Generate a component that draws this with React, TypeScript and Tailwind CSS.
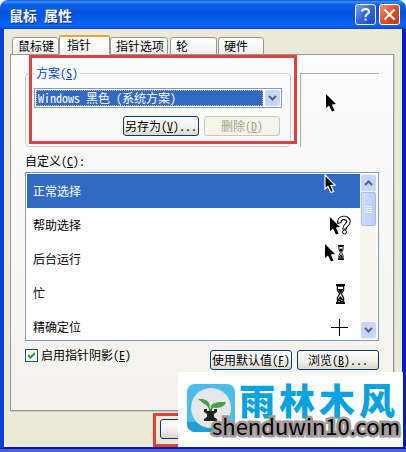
import React, { useState } from 'react';

const TABS = ['鼠标键', '指针', '指针选项', '轮', '硬件'];

const TAB_WIDTHS: Record<string, string> = {
  鼠标键: 'w-[47px]',
  指针: 'w-[51px]',
  指针选项: 'w-[58px]',
  轮: 'w-[47px] ml-0.5',
  硬件: 'w-[46px] ml-px',
};

function Arrow({ x = 0, y = 0, outlined = false }: { x?: number; y?: number; outlined?: boolean }) {
  return (
    <path
      transform={`translate(${x} ${y})`}
      d="M1 0 L1 14 L4 11.400 L7 17.500 L9.600 16.400 L6.800 10.400 L11 10 Z"
      fill="#000"
      stroke={outlined ? '#fff' : 'none'}
      strokeWidth={outlined ? 1.2 : 0}
    />
  );
}

function Hourglass({ x, y, w, h }: { x: number; y: number; w: number; h: number }) {
  return (
    <svg x={x} y={y} width={w} height={h} viewBox="0 0 10 20" preserveAspectRatio="none">
      <path d="M0 0h10v2H0zM0 18h10v2H0z" fill="#000" />
      <path d="M1.5 2v4L4 10l-2.500 4v4h7v-4L6 10l2.500-4V2z" fill="#fff" stroke="#000" strokeWidth="1.3" />
      <path d="M2 5h6L5 10zM5 12l3 3.500V18H2v-2.500z" fill="#000" />
      <path d="M4 15h1v1H4zM6 16h1v1H6zM3 17h1v1H3z" fill="#fff" />
    </svg>
  );
}

const CURSORS: { name: string; icon: React.ReactNode }[] = [
  { name: '正常选择', icon: <Arrow outlined /> },
  {
    name: '帮助选择',
    icon: (
      <>
        <Arrow x={5} y={8} />
        <path d="M15.500 14.500 C14 7.500 24.500 7.500 24.500 12.500 C24.500 16 20.500 16 20.500 20.500" fill="none" stroke="#000" strokeWidth="4.500" />
        <path d="M15.500 13.500 C14 7.500 24.500 7.500 24.500 12.500 C24.500 16 20.500 16 20.500 19.500" fill="none" stroke="#fff" strokeWidth="2.500" />
        <circle cx="20.500" cy="23" r="2" fill="#fff" stroke="#000" />
      </>
    ),
  },
  {
    name: '后台运行',
    icon: (
      <>
        <Arrow y={1} />
        <Hourglass x={14} y={2} w={6} h={15} />
      </>
    ),
  },
  { name: '忙', icon: <Hourglass x={12} y={7} w={9} h={20} /> },
  { name: '精确定位', icon: <path d="M15.500 8v17M7 16.500h17" stroke="#000" fill="none" /> },
];

function Chevron({ up = false }: { up?: boolean }) {
  return (
    <svg className="w-[9px] h-[6px]" viewBox="0 0 9 6" fill="none" stroke="#4d6185" strokeWidth="2">
      <path d={up ? 'M1 5l3.500-3.500L8 5' : 'M1 1l3.500 3.500L8 1'} />
    </svg>
  );
}

function XpButton({ children, className = '', ...rest }: React.ButtonHTMLAttributes<HTMLButtonElement>) {
  return (
    <button
      className={`h-5 shrink-0 rounded-[3px] border border-[#003c74] bg-linear-to-b from-white via-[#f3f2ed] to-[#dcd8cc] text-center leading-4 whitespace-nowrap disabled:border-[#c9c7ba] disabled:from-[#f5f4ea] disabled:via-[#f5f4ea] disabled:to-[#f5f4ea] disabled:text-[#a1a192] ${className}`}
      {...rest}
    >
      {children}
    </button>
  );
}

function TitleBar() {
  return (
    <header className="flex h-[29px] shrink-0 items-center gap-[3px] rounded-t-lg bg-[linear-gradient(#0a4cc4_0%,#3c92fb_6%,#0a5fe6_16%,#0453dc_45%,#0260f4_75%,#0562f6_90%,#0345c4_100%)] pr-[6px] pl-[9px]">
      <h1 className="flex-1 text-sm leading-5 font-bold text-white [text-shadow:1px_1px_#0a2f8c]">鼠标 属性</h1>
      <button aria-label="帮助" className="flex size-[21px] items-center justify-center rounded-[3px] border border-white bg-linear-to-br from-[#7ba0f5] via-[#3364e0] to-[#1c48c8]">
        <svg className="size-[15px]" viewBox="0 0 15 15" fill="none" stroke="#fff" strokeWidth="2">
          <path d="M4 4.500C4 1 11 1 11 4.500C11 7 7.500 7 7.500 10M7.500 11.500v2" />
        </svg>
      </button>
      <button aria-label="关闭" className="flex size-[21px] items-center justify-center rounded-[3px] border border-white bg-linear-to-br from-[#ee9478] via-[#dd4f2a] to-[#c03a14]">
        <svg className="size-[13px]" viewBox="0 0 13 13" stroke="#fff" strokeWidth="2.200">
          <path d="M1.500 1.500l10 10M11.500 1.500l-10 10" />
        </svg>
      </button>
    </header>
  );
}

function Scrollbar() {
  return (
    <div className="flex w-[17px] shrink-0 flex-col bg-[#f6f5ee] p-px">
      <button aria-label="向上" className="flex h-4 shrink-0 items-center justify-center rounded-[2px] bg-[#c6d5fb]">
        <Chevron up />
      </button>
      <div className="mt-px flex h-[34px] flex-col items-center justify-center gap-px rounded-[2px] border border-[#a9bdea] bg-linear-to-r from-[#d2defd] to-[#b9cbf8]">
        <i className="h-px w-[6px] bg-[#eef4fe]" />
        <i className="h-px w-[6px] bg-[#eef4fe]" />
        <i className="h-px w-[6px] bg-[#eef4fe]" />
        <i className="h-px w-[6px] bg-[#eef4fe]" />
      </div>
      <div className="flex-1" />
      <button aria-label="向下" className="flex h-4 shrink-0 items-center justify-center rounded-[2px] bg-[#c6d5fb]">
        <Chevron />
      </button>
    </div>
  );
}

function Watermark() {
  return (
    <div className="absolute right-[3px] bottom-[2px] z-10 h-[75px] w-[225px] bg-white">
      <svg className="absolute top-3 left-[9px] size-12" viewBox="0 0 48 48">
        <rect width="48" height="48" rx="8" fill="#4bbde8" />
        <path d="M0 38h48v2a8 8 0 0 1-8 8H8a8 8 0 0 1-8-8z" fill="#1f9fd4" />
        <circle cx="24" cy="24" r="20" fill="#e6e7e9" />
        <path d="M17 25h3v2h2v-2h3v2h2v-2h3v3l-3 2v3l3 2v2H17v-2l3-2v-3l-3-2z" fill="#222" />
        <path d="M23 27C23 23 20 20 16 17M24 27C24 24 26 22 30 20" fill="none" stroke="#3a8a3c" strokeWidth="1.500" />
        <path d="M11 15C16 15 22 15 23 22C18 21 16 19 11 15zM23 23C26 18 31 18 39 18C37 24 30 25 23 23z" fill="#44a148" />
      </svg>
      <div className="absolute top-[7px] left-[61px] flex gap-1 font-['Noto_Sans_CJK_SC',sans-serif] text-[36px] leading-10 font-black text-[#08a2e2]">
        <span>雨</span>
        <span>林</span>
        <span>木</span>
        <span>风</span>
      </div>
      <div className="absolute top-[35px] left-[34px] font-['Noto_Sans_CJK_SC','Open_Sans',sans-serif] text-[22px] leading-9 text-black [-webkit-text-stroke:5px_#a39b99] [paint-order:stroke_fill]">
        shenduwin10.com
      </div>
    </div>
  );
}

export default function App() {
  const [tab, setTab] = useState('指针');
  const [selected, setSelected] = useState(0);
  const [shadow, setShadow] = useState(true);

  return (
    <div className="relative flex min-h-screen flex-col border-b-[3px] border-[#4a60dc] bg-white font-['Noto_Sans_Mono_CJK_SC','Noto_Sans_CJK_SC',monospace] text-xs leading-4 text-black">
      <TitleBar />

      <main className="flex flex-1 flex-col border-x-4 border-b-2 border-[#0c3fd6] border-r-[#0a1fb0] border-b-[#0a1fa0] bg-[#ece9d8] pt-[6px]">
        <div role="tablist" className="relative z-10 -mb-px flex h-5 shrink-0 items-end pl-2">
          {TABS.map(t => (
            <button
              key={t}
              role="tab"
              aria-selected={t === tab}
              onClick={() => setTab(t)}
              className={`${TAB_WIDTHS[t]} shrink-0 rounded-t-[3px] border text-left whitespace-nowrap ${
                t === tab
                  ? 'h-5 border-t-2 border-[#919b9c] border-t-[#e9a53c] border-b-[#fcfcfe] bg-[#fcfcfe] pb-1 pl-[7px]'
                  : 'h-[18px] border-[#919b9c] bg-linear-to-b from-white to-[#f0f0ea] pl-[5px]'
              }`}
            >
              {t}
            </button>
          ))}
        </div>

        <section className="relative mr-2 ml-[6px] flex flex-1 flex-col border border-[#919b9c] bg-linear-to-b from-[#fcfcfe] to-[#f3f2ec] px-[14px] pt-[10px] shadow-[1px_1px_#cfccbd]">
          <div className="flex gap-[9px]">
            <fieldset className="min-w-0 flex-1 rounded-[4px] border border-[#d0d0bf] px-2 pb-[10px]">
              <legend className="px-0.5 text-[#0046d5]">
                <label htmlFor="scheme">
                  方案(<u>S</u>)
                </label>
              </legend>
              <div className="relative mt-[7px] h-5 border border-[#7f9db9] bg-white p-px pr-[18px]">
                <select
                  id="scheme"
                  className="block h-4 w-full appearance-none border border-dotted border-[#e0b060] bg-[#316ac5] pl-px leading-[14px] text-white outline-none"
                >
                  <option>Windows 黑色 (系统方案)</option>
                </select>
                <span className="pointer-events-none absolute top-px right-px flex h-4 w-[15px] items-center justify-center rounded-[2px] bg-[#c6d5fb]">
                  <Chevron />
                </span>
              </div>
              <div className="mt-2 flex justify-end gap-[5px] pr-0.5">
                <XpButton className="w-[76px]">
                  另存为(<u>V</u>)...
                </XpButton>
                <XpButton className="w-[76px]" disabled>
                  删除(<u>D</u>)
                </XpButton>
              </div>
            </fieldset>
            <div className="mt-2 w-[79px] shrink-0 border-t border-l border-[#aca899] pt-5 pl-6">
              <svg className="size-8" viewBox="0 0 32 32">
                <Arrow />
              </svg>
            </div>
          </div>
          <div className="pointer-events-none absolute top-0 left-[18px] h-[89px] w-[268px] border-[3px] border-[#dc4444]" />

          <div id="custom-label" className="mt-[6px] mb-[3px]">
            自定义(<u>C</u>):
          </div>
          <div className="flex h-[169px] border border-[#7f9db9] bg-white p-px">
            <ul role="listbox" aria-labelledby="custom-label" className="flex-1 overflow-hidden">
              {CURSORS.map((c, i) => (
                <li
                  key={c.name}
                  role="option"
                  aria-selected={i === selected}
                  onClick={() => setSelected(i)}
                  className={`flex h-[34px] items-center justify-between pr-1 pl-[6px] ${
                    i === selected ? 'bg-[#316ac5] text-white' : ''
                  }`}
                >
                  <span>{c.name}</span>
                  <svg className="size-8 overflow-visible" viewBox="0 0 32 32">
                    {c.icon}
                  </svg>
                </li>
              ))}
            </ul>
            <Scrollbar />
          </div>

          <div className="mt-[6px] flex items-start gap-[5px]">
            <label className="flex flex-1 items-center gap-[3px]">
              <span className="relative size-[13px]">
                <input
                  type="checkbox"
                  checked={shadow}
                  onChange={e => setShadow(e.target.checked)}
                  className="block size-[13px] appearance-none border border-[#1c5180] bg-white"
                />
                {shadow && (
                  <svg className="pointer-events-none absolute top-[3px] left-[3px] size-[7px]" viewBox="0 0 7 7" fill="none" stroke="#21a121" strokeWidth="2">
                    <path d="M0 3l2.500 2.500L7 1" />
                  </svg>
                )}
              </span>
              <span>
                启用指针阴影(<u>E</u>)
              </span>
            </label>
            <XpButton className="mt-[3px] w-[82px]">
              使用默认值(<u>F</u>)
            </XpButton>
            <XpButton className="mt-[3px] w-[82px]">
              浏览(<u>B</u>)...
            </XpButton>
          </div>
        </section>

        <footer className="relative flex h-9 shrink-0 items-center justify-end gap-[6px] pr-[5px]">
          <XpButton className="w-[75px]" aria-label="确定" />
          <XpButton className="w-[75px]" aria-label="取消" />
          <XpButton className="w-[75px]" aria-label="应用" />
          <div className="pointer-events-none absolute right-[164px] bottom-0 h-[34px] w-[85px] border-[3px] border-[#e0403c]" />
        </footer>
      </main>

      <Watermark />
    </div>
  );
}
